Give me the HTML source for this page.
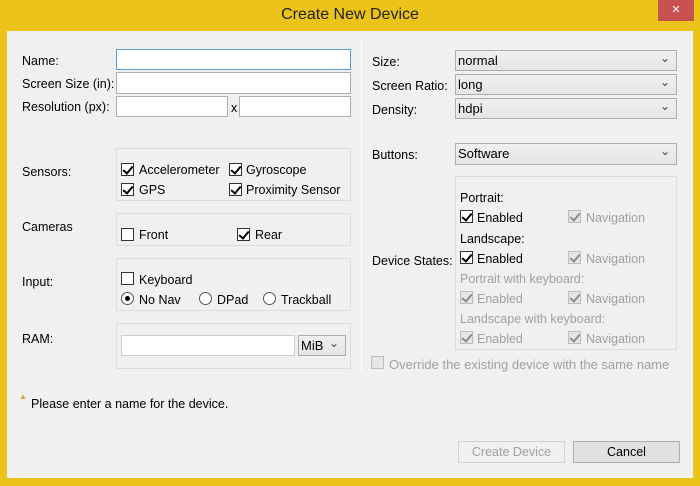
<!DOCTYPE html>
<html><head><style>
*{box-sizing:border-box;margin:0;padding:0}
body{width:700px;height:486px;background:#ecc319;font-family:"Liberation Sans",sans-serif;font-size:12.5px;color:#000;position:relative;overflow:hidden}
.a{position:absolute;white-space:nowrap}
#c{position:absolute;left:7px;top:31px;width:686px;height:447px;background:#f0f0f0}
.in{position:absolute;background:#fff;border:1px solid #abadb3}
.grp{position:absolute;border:1px solid #dcdcdc}
.cb{position:absolute;width:13px;height:13px;border:1px solid #333;background:#fff}
.cb.d{border-color:#bcbcbc;background:#e6e6e6}
.ck::after{content:"";position:absolute;left:3px;top:0px;width:4px;height:8px;border:solid #000;border-width:0 2px 2px 0;transform:rotate(40deg)}
.cb.d.ck::after{border-color:#8a8a8a}
.rd{position:absolute;width:13px;height:13px;border:1px solid #555;border-radius:50%;background:#fff}
.rd.on::after{content:"";position:absolute;left:3px;top:3px;width:5px;height:5px;border-radius:50%;background:#000}
.cmb{position:absolute;border:1px solid #acacac;background:linear-gradient(#f0f0f0,#e5e5e5);padding-left:2px;line-height:19px;font-size:13px}
.cmb::after{content:"⌄";position:absolute;right:6px;top:-2px;font-size:12px;color:#444}
.g{color:#a0a0a0}
.btn{position:absolute;border:1px solid #adadad;background:#e1e1e1;text-align:center;line-height:20px}
</style></head><body>
<div class="a" style="left:0;width:700px;text-align:center;top:6px;font-size:16px;color:#222">Create New Device</div>
<div class="a" style="left:658px;top:0;width:36px;height:21px;background:#c75050;color:#fff;text-align:center;font-size:11px;line-height:20px">✕</div>
<div id="c"></div>
<div class="a" style="left:22px;top:54px">Name:</div>
<div class="in" style="left:116px;top:49px;width:235px;height:21px;border-color:#5b9bd5"></div>
<div class="a" style="left:22px;top:77px">Screen Size (in):</div>
<div class="in" style="left:116px;top:72px;width:235px;height:22px"></div>
<div class="a" style="left:22px;top:100px">Resolution (px):</div>
<div class="in" style="left:116px;top:96px;width:112px;height:21px"></div>
<div class="a" style="left:231px;top:101px">x</div>
<div class="in" style="left:239px;top:96px;width:112px;height:21px"></div>

<div class="a" style="left:22px;top:165px">Sensors:</div>
<div class="grp" style="left:116px;top:148px;width:235px;height:53px"></div>
<div class="cb ck" style="left:121px;top:163px"></div><div class="a" style="left:139px;top:163px">Accelerometer</div>
<div class="cb ck" style="left:229px;top:163px"></div><div class="a" style="left:246px;top:163px">Gyroscope</div>
<div class="cb ck" style="left:121px;top:183px"></div><div class="a" style="left:139px;top:183px">GPS</div>
<div class="cb ck" style="left:229px;top:183px"></div><div class="a" style="left:246px;top:183px">Proximity Sensor</div>

<div class="a" style="left:22px;top:220px">Cameras</div>
<div class="grp" style="left:116px;top:213px;width:235px;height:33px"></div>
<div class="cb" style="left:121px;top:228px"></div><div class="a" style="left:139px;top:228px">Front</div>
<div class="cb ck" style="left:237px;top:228px"></div><div class="a" style="left:255px;top:228px">Rear</div>

<div class="a" style="left:22px;top:275px">Input:</div>
<div class="grp" style="left:116px;top:258px;width:235px;height:53px"></div>
<div class="cb" style="left:121px;top:272px"></div><div class="a" style="left:139px;top:273px">Keyboard</div>
<div class="rd on" style="left:121px;top:292px"></div><div class="a" style="left:139px;top:293px">No Nav</div>
<div class="rd" style="left:199px;top:292px"></div><div class="a" style="left:217px;top:293px">DPad</div>
<div class="rd" style="left:263px;top:292px"></div><div class="a" style="left:281px;top:293px">Trackball</div>

<div class="a" style="left:22px;top:332px">RAM:</div>
<div class="grp" style="left:116px;top:323px;width:235px;height:46px"></div>
<div class="in" style="left:121px;top:335px;width:174px;height:21px;border-color:#ccc"></div>
<div class="cmb" style="left:298px;top:335px;width:48px;height:21px">MiB</div>

<div class="a" style="left:361px;top:40px;width:1px;height:332px;background:#fff"></div>

<div class="a" style="left:372px;top:55px">Size:</div>
<div class="cmb" style="left:455px;top:50px;width:222px;height:21px">normal</div>
<div class="a" style="left:372px;top:79px">Screen Ratio:</div>
<div class="cmb" style="left:455px;top:74px;width:222px;height:21px">long</div>
<div class="a" style="left:372px;top:103px">Density:</div>
<div class="cmb" style="left:455px;top:98px;width:222px;height:21px">hdpi</div>
<div class="a" style="left:372px;top:148px">Buttons:</div>
<div class="cmb" style="left:455px;top:143px;width:222px;height:22px">Software</div>

<div class="a" style="left:372px;top:254px">Device States:</div>
<div class="grp" style="left:455px;top:176px;width:222px;height:174px"></div>
<div class="a" style="left:460px;top:191px">Portrait:</div>
<div class="cb ck" style="left:460px;top:210px"></div><div class="a" style="left:477px;top:211px">Enabled</div>
<div class="cb d ck" style="left:568px;top:210px"></div><div class="a g" style="left:586px;top:211px">Navigation</div>
<div class="a" style="left:460px;top:232px">Landscape:</div>
<div class="cb ck" style="left:460px;top:251px"></div><div class="a" style="left:477px;top:252px">Enabled</div>
<div class="cb d ck" style="left:568px;top:251px"></div><div class="a g" style="left:586px;top:252px">Navigation</div>
<div class="a g" style="left:460px;top:272px">Portrait with keyboard:</div>
<div class="cb d ck" style="left:460px;top:291px"></div><div class="a g" style="left:477px;top:292px">Enabled</div>
<div class="cb d ck" style="left:568px;top:291px"></div><div class="a g" style="left:586px;top:292px">Navigation</div>
<div class="a g" style="left:460px;top:312px">Landscape with keyboard:</div>
<div class="cb d ck" style="left:460px;top:331px"></div><div class="a g" style="left:477px;top:332px">Enabled</div>
<div class="cb d ck" style="left:568px;top:331px"></div><div class="a g" style="left:586px;top:332px">Navigation</div>

<div class="cb d" style="left:371px;top:356px"></div><div class="a g" style="left:389px;top:357px;font-size:13px">Override the existing device with the same name</div>

<div class="a" style="left:19px;top:392px;font-size:8px;color:#d9a030">▲</div>
<div class="a" style="left:31px;top:397px">Please enter a name for the device.</div>

<div class="btn g" style="left:458px;top:441px;width:107px;height:22px;background:#f0f0f0;border-color:#d0d0d0">Create Device</div>
<div class="btn" style="left:573px;top:441px;width:107px;height:22px">Cancel</div>
</body></html>
